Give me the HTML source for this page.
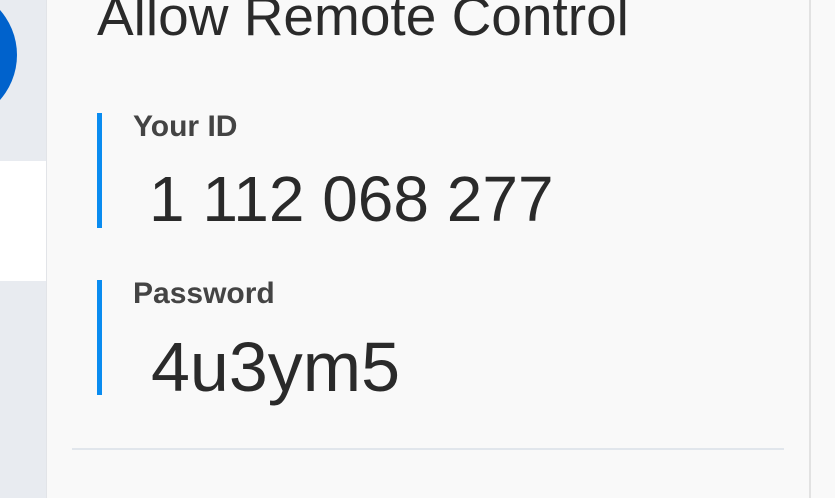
<!DOCTYPE html>
<html><head><style>
body{margin:0;width:835px;height:498px;overflow:hidden;background:#f9f9f9;font-family:"Liberation Sans",sans-serif;position:relative}
div{position:absolute}
.t{white-space:nowrap;line-height:1}
</style></head><body>
<div style="left:0;top:0;width:46px;height:498px;background:#e8ebf0"></div>
<div style="left:0;top:161px;width:46px;height:120px;background:#fff"></div>
<div style="left:-119px;top:-13px;width:136px;height:136px;border-radius:50%;background:#0062cc"></div>
<div style="left:46px;top:0;width:1px;height:498px;background:#e2e4e8"></div>
<div style="left:809px;top:0;width:2px;height:498px;background:#e2e2e2"></div>
<div class="t" style="left:97px;top:-11px;font-size:55px;color:#2a2a2a">Allow Remote Control</div>
<div style="left:97px;top:113px;width:5px;height:115px;background:#0a8cf0"></div>
<div style="left:97px;top:280px;width:5px;height:115px;background:#0a8cf0"></div>
<div class="t" style="left:133px;top:112px;font-size:30px;font-weight:bold;color:#444">Your ID</div>
<div class="t" style="left:149px;top:167px;font-size:64px;color:#2a2a2a">1 112 068 277</div>
<div class="t" style="left:133px;top:279px;font-size:30px;font-weight:bold;color:#444">Password</div>
<div class="t" style="left:151px;top:332px;font-size:70px;color:#2a2a2a">4u3ym5</div>
<div style="left:72px;top:448px;width:712px;height:2px;background:#e1e6ec"></div>
</body></html>
